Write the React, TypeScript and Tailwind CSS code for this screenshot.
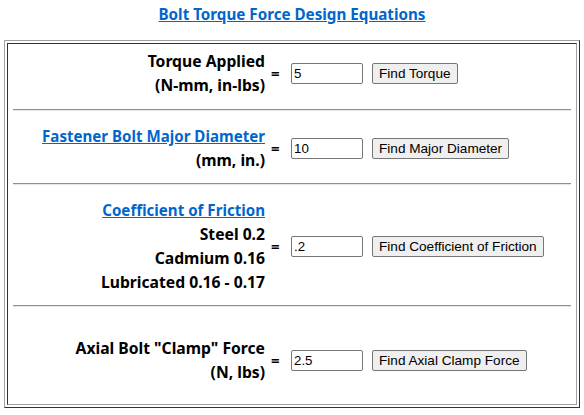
import { useState } from 'react';

type Row = {
  lines: { text: string; link?: boolean }[];
  value: string;
  button: string;
};

const rows: Row[] = [
  {
    lines: [{ text: 'Torque Applied' }, { text: '(N-mm, in-lbs)' }],
    value: '5',
    button: 'Find Torque',
  },
  {
    lines: [{ text: 'Fastener Bolt Major Diameter', link: true }, { text: '(mm, in.)' }],
    value: '10',
    button: 'Find Major Diameter',
  },
  {
    lines: [
      { text: 'Coefficient of Friction', link: true },
      { text: 'Steel 0.2' },
      { text: 'Cadmium 0.16' },
      { text: 'Lubricated 0.16 - 0.17' },
    ],
    value: '.2',
    button: 'Find Coefficient of Friction',
  },
  {
    lines: [{ text: 'Axial Bolt "Clamp" Force' }, { text: '(N, lbs)' }],
    value: '2.5',
    button: 'Find Axial Clamp Force',
  },
];

function Section({ row }: { row: Row }) {
  const [val, setVal] = useState(row.value);
  return (
    <div className="flex items-center">
      <div className="w-[257px] text-right text-[15.7px] leading-[24px] font-bold text-black">
        {row.lines.map((l) =>
          l.link ? (
            <div key={l.text}>
              <a href="#" className="text-[15.1px] text-[#0066cc] underline">
                {l.text}
              </a>
            </div>
          ) : (
            <div key={l.text}>{l.text}</div>
          )
        )}
      </div>
      <div className="w-[26px] pl-[6px] text-[15px] font-bold text-black">=</div>
      <input
        value={val}
        onChange={(e) => setVal(e.target.value)}
        className="w-[72px] h-[21px] px-[2px] border border-[#767676] rounded-[2px] bg-white text-[13.33px] font-['Liberation_Sans',Arial,sans-serif] text-black outline-none"
      />
      <button className="ml-[9px] h-[21px] px-[6px] border border-[#767676] rounded-[2px] bg-[#efefef] text-[13.6px] leading-[17px] font-['Liberation_Sans',Arial,sans-serif] text-black">
        {row.button}
      </button>
    </div>
  );
}

function Rule({ top, bottom }: { top: string; bottom: string }) {
  return <div className={`mx-[5px] border-t border-t-[#8f8f8f] border-b border-b-[#e6e6e6] ${top} ${bottom}`} />;
}

export default function App() {
  return (
    <div className="w-[584px] h-[415px] bg-white font-['Noto_Sans','Open_Sans',sans-serif] overflow-hidden">
      <div className="h-[40px] pt-[2px] text-center">
        <a href="#" className="text-[15.2px] leading-[20px] font-bold text-[#0066cc] underline">
          Bolt Torque Force Design Equations
        </a>
      </div>
      <div className="ml-[4px] w-[576px] border border-t-[#a0a0a0] border-l-[#a0a0a0] border-r-[#333333] border-b-[#333333] p-[2px]">
        <div className="border border-t-[#333333] border-l-[#333333] border-r-[#a0a0a0] border-b-[#a0a0a0] pt-[5px] pb-[20px]">
          <Section row={rows[0]} />
          <Rule top="mt-[12px]" bottom="mb-[13px]" />
          <Section row={rows[1]} />
          <Rule top="mt-[11px]" bottom="mb-[13px]" />
          <Section row={rows[2]} />
          <Rule top="mt-[11px]" bottom="mb-[29px]" />
          <Section row={rows[3]} />
        </div>
      </div>
    </div>
  );
}
